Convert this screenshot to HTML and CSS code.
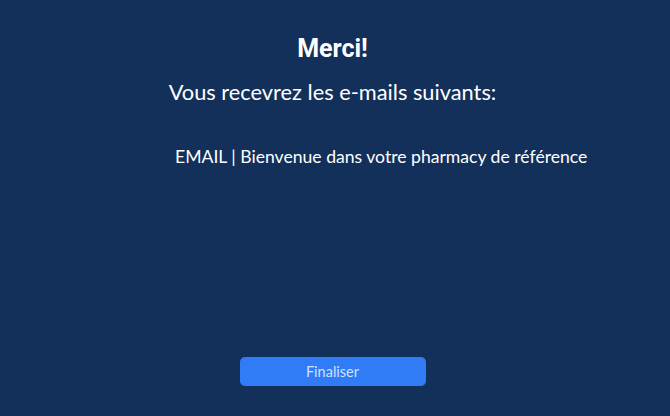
FILE: index.html
```html
<!DOCTYPE html>
<html lang="fr">
<head>
<meta charset="utf-8">
<link rel="stylesheet" href="styles.css">
</head>
<body>
<main class="page">
  <h1 class="title">Merci!</h1>
  <p class="subtitle">Vous recevrez les e-mails suivants:</p>
  <ul class="emails">
    <li class="email">EMAIL | Bienvenue dans votre pharmacy de référence</li>
  </ul>
  <div class="spacer"></div>
  <button class="finish">Finaliser</button>
</main>
</body>
</html>
```
FILE: styles.css
```css
html, body {
  margin: 0;
  padding: 0;
  height: 100%;
  background: #13305a;
}
.page {
  height: 416px;
  box-sizing: border-box;
  display: flex;
  flex-direction: column;
  align-items: center;
  padding: 34px 5px 30px 0;
  color: #ffffff;
  font-family: Lato, "Open Sans", sans-serif;
}
.title {
  margin: 0;
  font-family: Roboto, "Liberation Sans", sans-serif;
  font-weight: 700;
  font-size: 25px;
  line-height: 30px;
}
.subtitle {
  margin: 15px 0 0;
  font-size: 21.8px;
  line-height: 26px;
}
.emails {
  list-style: none;
  align-self: flex-start;
  margin: 41px 0 0 175px;
  padding: 0;
}
.email {
  font-size: 17.6px;
  line-height: 22px;
}
.spacer {
  flex: 1;
}
.finish {
  width: 186px;
  height: 29px;
  border: 0;
  border-radius: 5px;
  background: #2f7cf6;
  color: #cfe1ff;
  font-family: Lato, sans-serif;
  font-size: 14.5px;
  cursor: pointer;
}
```
